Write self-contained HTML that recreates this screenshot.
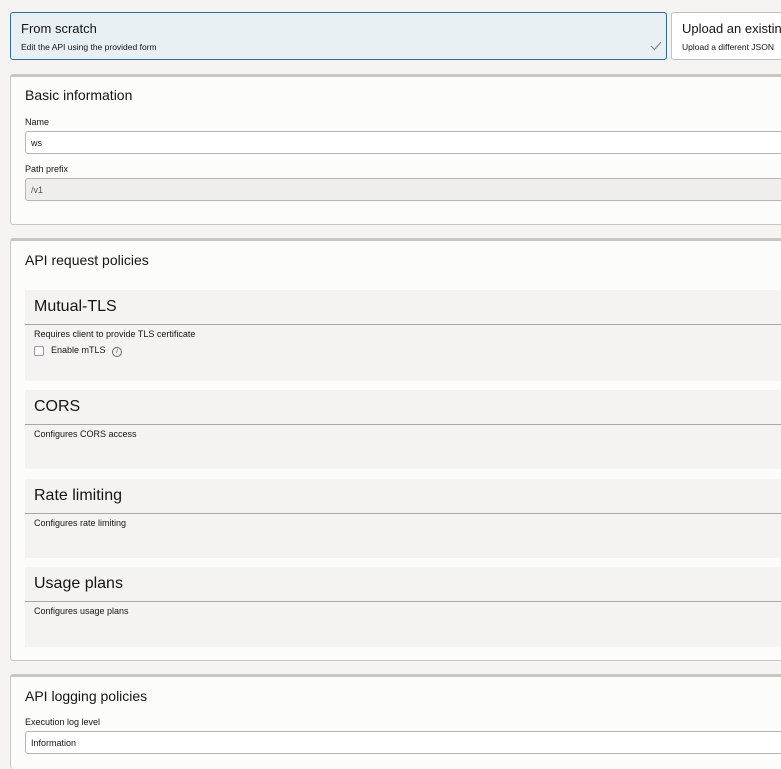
<!DOCTYPE html>
<html style="overflow:hidden;height:769px"><head><style>
*{box-sizing:border-box;margin:0;padding:0}
body{width:781px;height:769px;overflow:hidden;background:#f5f4f2;font-family:"Liberation Sans",Arial,sans-serif;color:#161513;position:relative}
.a{position:absolute}
.card{border-radius:3px}
.panel{position:absolute;left:10px;width:790px;background:#fcfcfb;border:1px solid #c8c6c3;border-top:3px solid #c8c6c3;border-radius:3px}
.inp{position:absolute;left:25px;width:780px;height:23px;border:1px solid #b6b4b1;border-radius:3px;background:#fff;font-size:9px;padding:6px 5px}
.lbl{position:absolute;left:25px;font-size:9px}
.sec{position:absolute;left:25px;width:780px;background:#f4f3f2}
.sec h3{font-weight:normal;font-size:16px;height:35px;padding:8px 9px;border-bottom:1px solid #a9a7a4}
.sec p{font-size:9px;padding:4px 9px}
</style></head><body>
<div class="a card" style="left:10px;top:12px;width:657px;height:48px;background:#e8f0f4;border:1px solid #2f6a90">
 <div class="a" style="left:10px;top:8px;font-size:13px">From scratch</div>
 <div class="a" style="left:10px;top:29px;font-size:8.5px">Edit the API using the provided form</div>
 <svg class="a" style="left:639px;top:28px" width="12" height="10"><path d="M1 5 L4.5 8.5 L11 1" stroke="#888" fill="none" stroke-width="1.2"/></svg>
</div>
<div class="a card" style="left:671px;top:12px;width:130px;height:48px;background:#fff;border:1px solid #c2c0bd">
 <div class="a" style="left:10px;top:8px;font-size:13px;white-space:nowrap">Upload an existing</div>
 <div class="a" style="left:10px;top:29px;font-size:8.5px;white-space:nowrap">Upload a different JSON</div>
</div>

<div class="panel" style="top:74px;height:151px"></div>
<div class="a" style="left:25px;top:87px;font-size:14px">Basic information</div>
<div class="lbl" style="top:117px">Name</div>
<div class="inp" style="top:131px">ws</div>
<div class="lbl" style="top:164px">Path prefix</div>
<div class="inp" style="top:178px;background:#efeeec;color:#555">/v1</div>

<div class="panel" style="top:238px;height:423px"></div>
<div class="a" style="left:25px;top:252px;font-size:14px">API request policies</div>
<div class="sec" style="top:290px;height:91px"><h3>Mutual-TLS</h3><p>Requires client to provide TLS certificate</p>
 <div class="a" style="left:9px;top:56px;width:10px;height:10px;border:1px solid #999;border-radius:2px;background:#fff"></div>
 <div class="a" style="left:26px;top:55px;font-size:9px">Enable mTLS</div>
 <div class="a" style="left:87px;top:57px;width:10px;height:10px;border:1px solid #666;border-radius:50%;font-size:7px;text-align:center;line-height:8px;font-style:italic;color:#555">i</div>
</div>
<div class="sec" style="top:390px;height:79px"><h3>CORS</h3><p>Configures CORS access</p></div>
<div class="sec" style="top:479px;height:79px"><h3>Rate limiting</h3><p>Configures rate limiting</p></div>
<div class="sec" style="top:567px;height:80px"><h3>Usage plans</h3><p>Configures usage plans</p></div>

<div class="panel" style="top:674px;height:95px;border-bottom:none"></div>
<div class="a" style="left:25px;top:688px;font-size:14px">API logging policies</div>
<div class="lbl" style="top:717px">Execution log level</div>
<div class="inp" style="top:731px">Information</div>
</body></html>
